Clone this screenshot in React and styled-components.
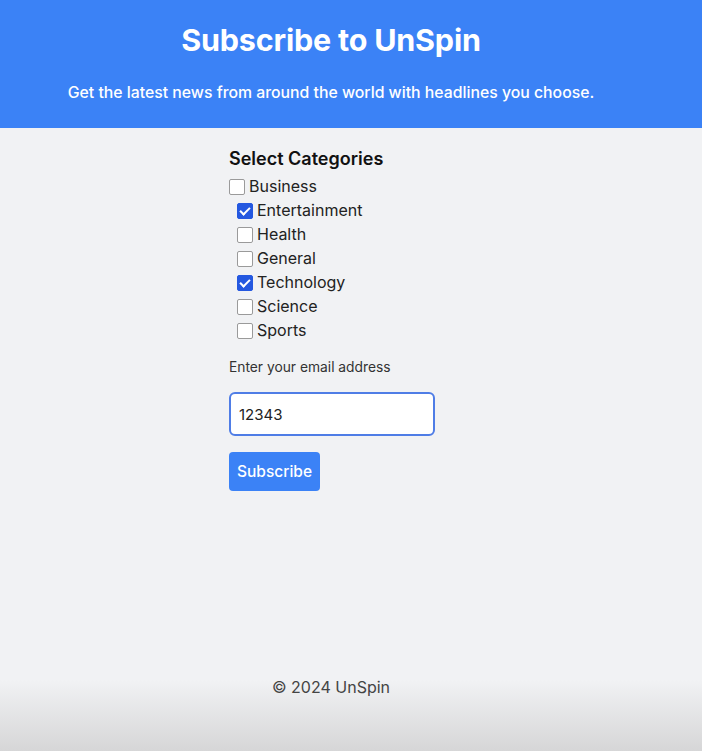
import React, { useState } from "react";
import styled, { createGlobalStyle } from "styled-components";

const GlobalStyle = createGlobalStyle`
  html, body {
    margin: 0;
    padding: 0;
  }
  body {
    font-family: Inter, "Noto Sans", sans-serif;
    background: #f1f2f4;
    color: #1f1f1f;
  }
`;

const Page = styled.div`
  min-height: 751px;
  display: flex;
  flex-direction: column;
  background: linear-gradient(to bottom, #f1f2f4 0, #f1f2f4 680px, #d6d6d7 751px);
`;

const Header = styled.header`
  height: 128px;
  background: #3b82f6;
  color: #fff;
  display: flex;
  flex-direction: column;
  align-items: center;
  padding-right: 40px;
  box-sizing: border-box;

  h1 {
    margin: 20px 0 0;
    font-size: 30.5px;
    line-height: 40px;
    font-weight: 700;
    letter-spacing: -0.2px;
  }
  p {
    margin: 23px 0 0;
    font-size: 15.8px;
    line-height: 20px;
    font-weight: 500;
  }
`;

const Main = styled.main`
  display: flex;
  justify-content: center;
  padding-right: 40px;
`;

const Form = styled.form`
  width: 205px;
  padding-top: 20px;
  margin-left: 1px;
`;

const Heading = styled.h2`
  margin: 0 0 4px;
  font-size: 18px;
  line-height: 22px;
  font-weight: 600;
  color: #111;
`;

const Option = styled.label`
  display: flex;
  align-items: center;
  height: 24px;
  padding-left: ${({ $indent }) => ($indent ? "8px" : "0")};
  font-size: 16px;
  color: #222;
  cursor: pointer;
`;

const Box = styled.input`
  appearance: none;
  margin: 0 4px 0 0;
  width: 16px;
  height: 16px;
  border: 1px solid #9a9a9a;
  border-radius: 2px;
  background: #fff;
  position: relative;
  top: 1px;

  &:checked {
    background: #2458e0;
    border-color: #2458e0;
  }
  &:checked::after {
    content: "";
    position: absolute;
    left: 4px;
    top: 1px;
    width: 4px;
    height: 8px;
    border: solid #fff;
    border-width: 0 2px 2px 0;
    transform: rotate(45deg);
  }
`;

const EmailLabel = styled.label`
  display: block;
  margin-top: 16px;
  font-size: 13.8px;
  line-height: 18px;
  color: #333;
`;

const EmailInput = styled.input`
  display: block;
  box-sizing: border-box;
  margin-top: 16px;
  width: 206px;
  height: 44px;
  padding: 0 8px;
  border: 2px solid #4f7de6;
  border-radius: 6px;
  background: #fff;
  font-family: Inter, sans-serif;
  font-size: 15px;
  color: #222;
  outline: none;
`;

const SubmitButton = styled.button`
  display: block;
  margin-top: 16px;
  height: 39px;
  padding: 0 8px;
  border: none;
  border-radius: 4px;
  background: #3b82f6;
  color: #fff;
  font-family: Inter, sans-serif;
  font-size: 15.5px;
  font-weight: 500;
`;

const Footer = styled.footer`
  margin-top: auto;
  padding: 0 40px 54px 0;
  text-align: center;
  font-size: 16px;
  color: #444;
`;

const categories = [
  { name: "Business", checked: false, indent: false },
  { name: "Entertainment", checked: true, indent: true },
  { name: "Health", checked: false, indent: true },
  { name: "General", checked: false, indent: true },
  { name: "Technology", checked: true, indent: true },
  { name: "Science", checked: false, indent: true },
  { name: "Sports", checked: false, indent: true },
];

export default function App() {
  const [selected, setSelected] = useState(
    categories.filter((c) => c.checked).map((c) => c.name)
  );
  const [email, setEmail] = useState("12343");

  const toggle = (name) =>
    setSelected((s) => (s.includes(name) ? s.filter((n) => n !== name) : [...s, name]));

  return (
    <>
      <GlobalStyle />
      <Page>
        <Header>
          <h1>Subscribe to UnSpin</h1>
          <p>Get the latest news from around the world with headlines you choose.</p>
        </Header>
        <Main>
          <Form onSubmit={(e) => e.preventDefault()}>
            <Heading>Select Categories</Heading>
            {categories.map((c) => (
              <Option key={c.name} $indent={c.indent}>
                <Box
                  type="checkbox"
                  checked={selected.includes(c.name)}
                  onChange={() => toggle(c.name)}
                />
                {c.name}
              </Option>
            ))}
            <EmailLabel htmlFor="email">Enter your email address</EmailLabel>
            <EmailInput id="email" value={email} onChange={(e) => setEmail(e.target.value)} />
            <SubmitButton type="submit">Subscribe</SubmitButton>
          </Form>
        </Main>
        <Footer>© 2024 UnSpin</Footer>
      </Page>
    </>
  );
}
